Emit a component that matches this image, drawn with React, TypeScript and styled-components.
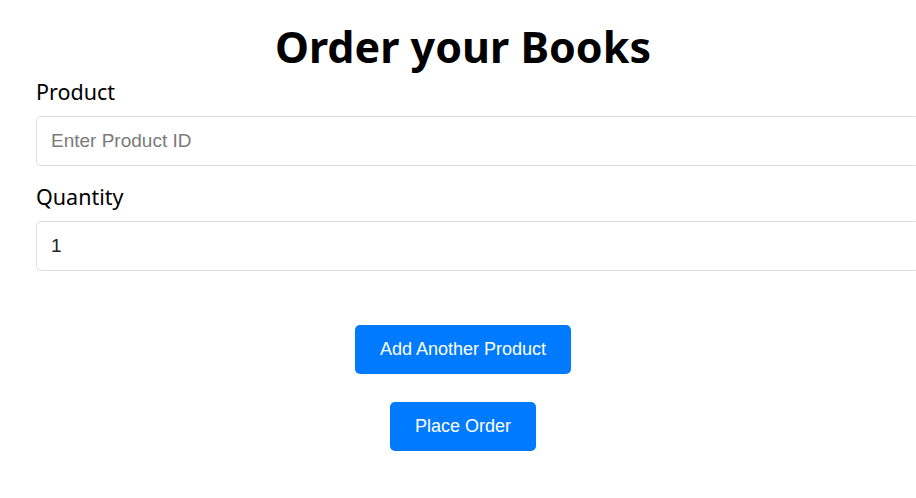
import React from "react";
import styled, { createGlobalStyle } from "styled-components";

const GlobalStyle = createGlobalStyle`
  html, body {
    margin: 0;
    padding: 0;
    background: #ffffff;
    overflow: hidden;
  }
  body {
    font-family: "Noto Sans", "Open Sans", sans-serif;
    color: #000000;
  }
`;

const Page = styled.div`
  width: 916px;
  height: 498px;
  overflow: hidden;
`;

const Form = styled.form`
  display: flex;
  flex-direction: column;
  padding: 18px 26px 0 36px;
`;

const Title = styled.h1`
  margin: 0 0 2px;
  text-align: center;
  font-family: "Noto Sans", "Open Sans", sans-serif;
  font-weight: 700;
  font-size: 43px;
  line-height: 58px;
`;

const Field = styled.div`
  display: flex;
  flex-direction: column;
  margin-bottom: 17px;
`;

const Label = styled.label`
  font-family: "Noto Sans", "Open Sans", sans-serif;
  font-size: 21.5px;
  line-height: 28px;
  margin-bottom: 10px;
`;

const Input = styled.input`
  width: 100%;
  box-sizing: content-box;
  height: 22px;
  padding: 13px 14px;
  border: 1px solid #dcdcdc;
  border-radius: 5px;
  font-family: "Liberation Sans", Arial, sans-serif;
  font-size: 19px;
  color: #222;
  outline: none;

  &::placeholder {
    color: #7a7a7a;
  }
`;

const Actions = styled.div`
  display: flex;
  flex-direction: column;
  align-items: center;
  gap: 28px;
  margin-top: 37px;
`;

const Button = styled.button`
  height: 49px;
  padding: 0 25px;
  border: none;
  border-radius: 5px;
  background: #007bff;
  color: #ffffff;
  font-family: "Liberation Sans", Arial, sans-serif;
  font-size: 18px;
  cursor: pointer;
`;

const App: React.FC = () => {
  return (
    <Page>
      <GlobalStyle />
      <Form onSubmit={(e) => e.preventDefault()}>
        <Title>Order your Books</Title>
        <Field>
          <Label htmlFor="product">Product</Label>
          <Input id="product" type="text" placeholder="Enter Product ID" />
        </Field>
        <Field>
          <Label htmlFor="quantity">Quantity</Label>
          <Input id="quantity" type="text" defaultValue="1" />
        </Field>
        <Actions>
          <Button type="button">Add Another Product</Button>
          <Button type="submit">Place Order</Button>
        </Actions>
      </Form>
    </Page>
  );
};

export default App;
